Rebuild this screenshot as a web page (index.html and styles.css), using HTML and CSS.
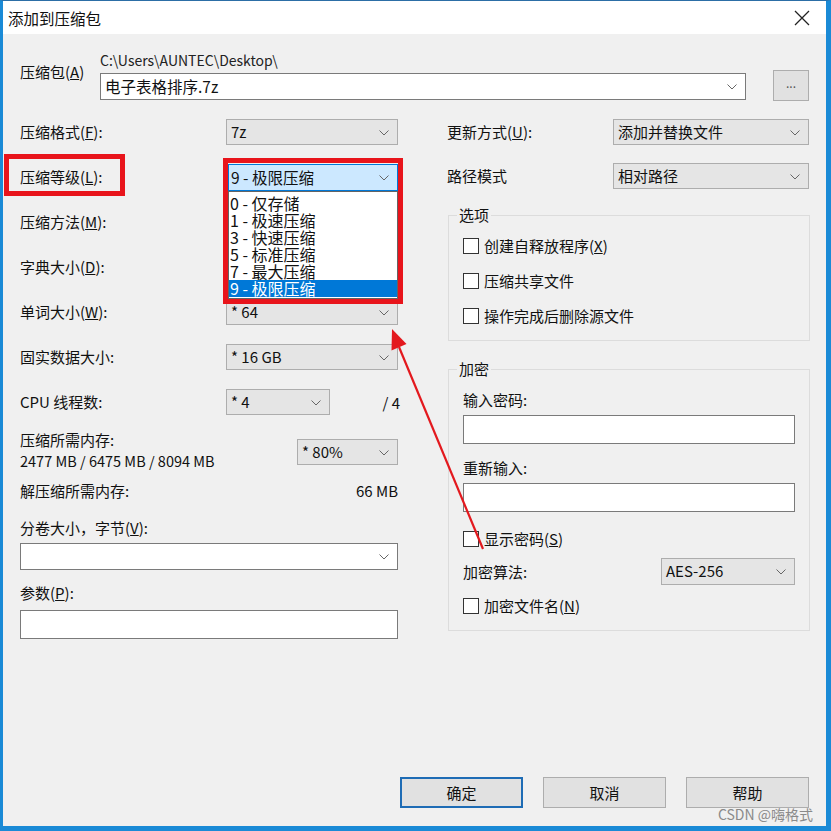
FILE: index.html
```html
<!DOCTYPE html>
<html lang="zh-CN">
<head>
  <meta charset="UTF-8">
  <title>添加到压缩包</title>
  <link rel="stylesheet" href="styles.css">
</head>
<body>
  <div class="window">
    <div class="titlebar">
      <span class="title">添加到压缩包</span>
      <svg class="close" width="16" height="16" viewBox="0 0 16 16">
        <path d="M1 1 L15 15 M15 1 L1 15" stroke="#222" stroke-width="1.3" fill="none"/>
      </svg>
    </div>

    <div class="content">
      <div class="archive-row">
        <label class="archive-lbl">压缩包(<u>A</u>)</label>
        <div class="archive-field">
          <div class="path">C:\Users\AUNTEC\Desktop\</div>
          <div class="combo white big full">电子表格排序.7z<svg class="chev" width="10" height="6" viewBox="0 0 10 6"><polyline points="0.5,0.5 5,5 9.5,0.5" fill="none" stroke="#666"/></svg></div>
        </div>
        <button class="browse">...</button>
      </div>

      <div class="columns">
        <div class="left">
          <div class="row">
            <label class="lbl">压缩格式(<u>F</u>):</label>
            <div class="combo">7z<svg class="chev" width="10" height="6" viewBox="0 0 10 6"><polyline points="0.5,0.5 5,5 9.5,0.5" fill="none" stroke="#666"/></svg></div>
          </div>
          <div class="row">
            <label class="lbl">压缩等级(<u>L</u>):</label>
            <span class="mark mark-label"></span>
            <div class="combo focused big">9 - 极限压缩<svg class="chev" width="10" height="6" viewBox="0 0 10 6"><polyline points="0.5,0.5 5,5 9.5,0.5" fill="none" stroke="#666"/></svg>
              <ul class="droplist">
                <li>0 - 仅存储</li>
                <li>1 - 极速压缩</li>
                <li>3 - 快速压缩</li>
                <li>5 - 标准压缩</li>
                <li>7 - 最大压缩</li>
                <li class="selected">9 - 极限压缩</li>
              </ul>
              <span class="mark mark-combo"></span>
            </div>
          </div>
          <div class="row">
            <label class="lbl">压缩方法(<u>M</u>):</label>
            <div class="combo"></div>
          </div>
          <div class="row">
            <label class="lbl">字典大小(<u>D</u>):</label>
            <div class="combo"></div>
          </div>
          <div class="row">
            <label class="lbl">单词大小(<u>W</u>):</label>
            <div class="combo">* 64<svg class="chev" width="10" height="6" viewBox="0 0 10 6"><polyline points="0.5,0.5 5,5 9.5,0.5" fill="none" stroke="#666"/></svg></div>
          </div>
          <div class="row">
            <label class="lbl">固实数据大小:</label>
            <div class="combo">* 16 GB<svg class="chev" width="10" height="6" viewBox="0 0 10 6"><polyline points="0.5,0.5 5,5 9.5,0.5" fill="none" stroke="#666"/></svg></div>
          </div>
          <div class="row cpu">
            <label class="lbl">CPU 线程数:</label>
            <div class="combo small">* 4<svg class="chev" width="10" height="6" viewBox="0 0 10 6"><polyline points="0.5,0.5 5,5 9.5,0.5" fill="none" stroke="#666"/></svg></div>
            <span class="right-val">/ 4</span>
          </div>
          <div class="mem-row">
            <div class="mem-lbl">
              <div>压缩所需内存:</div>
              <div>2477 MB / 6475 MB / 8094 MB</div>
            </div>
            <div class="combo pct">* 80%<svg class="chev" width="10" height="6" viewBox="0 0 10 6"><polyline points="0.5,0.5 5,5 9.5,0.5" fill="none" stroke="#666"/></svg></div>
          </div>
          <div class="unpack-row">
            <span>解压缩所需内存:</span>
            <span>66 MB</span>
          </div>
          <label class="stack-lbl split-lbl">分卷大小，字节(<u>V</u>):</label>
          <div class="combo white wide">&nbsp;<svg class="chev" width="10" height="6" viewBox="0 0 10 6"><polyline points="0.5,0.5 5,5 9.5,0.5" fill="none" stroke="#666"/></svg></div>
          <label class="stack-lbl param-lbl">参数(<u>P</u>):</label>
          <div class="textbox param-box"></div>
        </div>

        <div class="right">
          <div class="row">
            <label class="lbl lbl-r">更新方式(<u>U</u>):</label>
            <div class="combo combo-r">添加并替换文件<svg class="chev" width="10" height="6" viewBox="0 0 10 6"><polyline points="0.5,0.5 5,5 9.5,0.5" fill="none" stroke="#666"/></svg></div>
          </div>
          <div class="row path-row">
            <label class="lbl lbl-r">路径模式</label>
            <div class="combo combo-r">相对路径<svg class="chev" width="10" height="6" viewBox="0 0 10 6"><polyline points="0.5,0.5 5,5 9.5,0.5" fill="none" stroke="#666"/></svg></div>
          </div>

          <fieldset class="group options">
            <legend>选项</legend>
            <div class="check first"><span class="box"></span>创建自释放程序(<u>X</u>)</div>
            <div class="check"><span class="box"></span>压缩共享文件</div>
            <div class="check"><span class="box"></span>操作完成后删除源文件</div>
          </fieldset>

          <fieldset class="group crypt">
            <legend>加密</legend>
            <div class="field-lbl pw-lbl">输入密码:</div>
            <div class="textbox pw-box"></div>
            <div class="field-lbl re-lbl">重新输入:</div>
            <div class="textbox pw-box"></div>
            <div class="check show-pw"><span class="box"></span>显示密码(<u>S</u>)</div>
            <div class="row algo-row">
              <label class="lbl algo-lbl">加密算法:</label>
              <div class="combo algo">AES-256<svg class="chev" width="10" height="6" viewBox="0 0 10 6"><polyline points="0.5,0.5 5,5 9.5,0.5" fill="none" stroke="#666"/></svg></div>
            </div>
            <div class="check enc-name"><span class="box"></span>加密文件名(<u>N</u>)</div>
          </fieldset>
        </div>
      </div>

      <div class="buttons">
        <button class="btn default">确定</button>
        <button class="btn">取消</button>
        <button class="btn">帮助</button>
      </div>
    </div>

    <svg class="arrow" width="831" height="831" viewBox="0 0 831 831">
      <line x1="483" y1="549" x2="399" y2="347" stroke="#e3191e" stroke-width="2.2"/>
      <polygon points="392,329 406.5,344 391.5,350.5" fill="#e3191e"/>
    </svg>
    <div class="watermark">CSDN @嗨格式</div>
  </div>
</body>
</html>
```

FILE: styles.css
```css
body {
  margin: 0;
  padding: 0;
  font-family: "Noto Sans CJK SC", "Noto Sans", sans-serif;
  font-size: 15px;
  color: #111;
  background: #f0f0f0;
}
u {
  text-decoration: underline;
  text-underline-offset: 1px;
}
.window {
  position: relative;
  width: 831px;
  height: 831px;
  box-sizing: border-box;
  border-top: 1px solid #2c6ea6;
  border-left: 3px solid #1a8ad6;
  border-right: 5px solid #1a8ad6;
  border-bottom: 5px solid #1a8ad6;
  background: #f0f0f0;
  display: flex;
  flex-direction: column;
}
.titlebar {
  height: 33px;
  background: #fff;
  display: flex;
  align-items: center;
  justify-content: space-between;
  padding: 0 16px 0 5px;
  flex-shrink: 0;
}
.title {
  font-size: 15.5px;
  line-height: 20px;
}
.close {
  display: block;
  margin-top: 1px;
}
.content {
  flex: 1;
  display: flex;
  flex-direction: column;
  padding: 17px 16px 18px 17px;
}

/* top archive row */
.archive-row {
  display: flex;
  align-items: flex-start;
}
.archive-lbl {
  width: 80px;
  margin-top: 11px;
  line-height: 20px;
}
.archive-field {
  width: 646px;
}
.path {
  font-size: 14px;
  line-height: 18px;
  margin-bottom: 4px;
  color: #222;
}
.browse {
  width: 36px;
  height: 31px;
  margin: 19px 0 0 27px;
  padding: 0 0 6px;
  background: #e1e1e1;
  border: 1px solid #adadad;
  font-family: inherit;
  font-size: 12px;
  color: #555;
}

/* combo boxes */
.combo {
  position: relative;
  box-sizing: border-box;
  height: 26px;
  width: 172px;
  background: #e5e5e5;
  border: 1px solid #adadad;
  padding-left: 4px;
  line-height: 24px;
  font-size: 15px;
  white-space: nowrap;
}
.combo.white {
  background: #fff;
  border-color: #7a7a7a;
  height: 27px;
}
.combo.full {
  width: 100%;
}
.combo.big {
  font-size: 15.5px;
}
.chev {
  position: absolute;
  right: 8px;
  top: 10px;
}
.combo.focused {
  width: 170px;
  height: 27px;
  margin-left: 2px;
  background: #cce8ff;
  border-color: #0078d7;
  padding-left: 2px;
}
.droplist {
  position: absolute;
  left: -1px;
  top: 26px;
  width: 170px;
  box-sizing: border-box;
  margin: 0;
  padding: 3px 0 1px;
  list-style: none;
  background: #fff;
  border: 1px solid #646464;
  z-index: 2;
}
.droplist li {
  height: 17px;
  line-height: 17px;
  font-size: 16px;
  padding-left: 1px;
}
.droplist li.selected {
  background: #0078d7;
  color: #fff;
}
.mark {
  position: absolute;
  border: 5px solid #e8141b;
  box-sizing: border-box;
  z-index: 3;
}
.mark-combo {
  left: -6px;
  top: -7px;
  width: 180px;
  height: 146px;
}
.mark-label {
  left: -16px;
  top: -10px;
  width: 121px;
  height: 42px;
}

/* columns */
.columns {
  display: flex;
  margin-top: 18px;
}
.left {
  width: 378px;
  display: flex;
  flex-direction: column;
}
.right {
  width: 363px;
  margin-left: 49px;
  display: flex;
  flex-direction: column;
}
.row {
  position: relative;
  display: flex;
  align-items: center;
  height: 26px;
  margin-bottom: 19px;
}
.lbl {
  width: 206px;
  line-height: 20px;
  flex-shrink: 0;
}
.combo.small {
  width: 104px;
}
.right-val {
  margin-left: auto;
  margin-right: -2px;
}
.row.cpu {
  margin-bottom: 14px;
}
.mem-row {
  display: flex;
  align-items: flex-start;
}
.mem-lbl {
  line-height: 21px;
}
.mem-lbl div:last-child {
  font-size: 14.5px;
}
.combo.pct {
  width: 101px;
  margin: 10px 0 0 auto;
}
.unpack-row {
  display: flex;
  justify-content: space-between;
  line-height: 20px;
  margin-top: 10px;
}
.stack-lbl {
  display: block;
  line-height: 20px;
}
.split-lbl {
  margin-top: 17px;
  margin-bottom: 5px;
}
.combo.wide {
  width: 378px;
}
.param-lbl {
  margin-top: 13px;
  margin-bottom: 7px;
}
.textbox {
  box-sizing: border-box;
  height: 29px;
  background: #fff;
  border: 1px solid #7a7a7a;
}

/* right column */
.lbl-r {
  width: 166px;
}
.combo-r {
  width: 196px;
}
.row.path-row {
  margin-top: -1px;
  margin-bottom: 16px;
}
.group {
  margin: 0 0 0 1px;
  padding: 0 14px 14px;
  border: 1px solid #dcdcdc;
  min-width: 0;
}
.group legend {
  margin-left: -6px;
  padding: 0 2px;
  line-height: 20px;
}
.check {
  display: flex;
  align-items: center;
  height: 20px;
  margin-top: 15px;
  line-height: 20px;
}
.check.first {
  margin-top: 11px;
}
.box {
  width: 14px;
  height: 14px;
  border: 1px solid #333;
  background: #fff;
  margin-right: 5px;
  flex-shrink: 0;
}
.crypt {
  margin-top: 18px;
}
.field-lbl {
  line-height: 20px;
}
.pw-lbl {
  margin-top: 11px;
  margin-bottom: 5px;
}
.re-lbl {
  margin-top: 14px;
  margin-bottom: 5px;
}
.check.show-pw {
  margin-top: 17px;
}
.row.algo-row {
  margin: 9px 0 0;
  height: 27px;
}
.algo-lbl {
  width: 198px;
}
.combo.algo {
  width: 134px;
  height: 27px;
}
.check.enc-name {
  margin-top: 11px;
}

/* bottom buttons */
.buttons {
  margin-top: auto;
  display: flex;
  justify-content: flex-end;
  gap: 20px;
  padding-right: 1px;
}
.btn {
  width: 123px;
  height: 31px;
  background: #e1e1e1;
  border: 1px solid #adadad;
  font-family: inherit;
  font-size: 15px;
  color: #111;
  padding: 0;
}
.btn.default {
  border: 2px solid #1e6cb5;
}

/* annotation overlays */
.arrow {
  position: absolute;
  left: -3px;
  top: -1px;
  z-index: 4;
  pointer-events: none;
}
.watermark {
  position: absolute;
  right: 13px;
  bottom: 4px;
  font-size: 14px;
  line-height: 16px;
  color: #8a8a8a;
  z-index: 4;
}
```
